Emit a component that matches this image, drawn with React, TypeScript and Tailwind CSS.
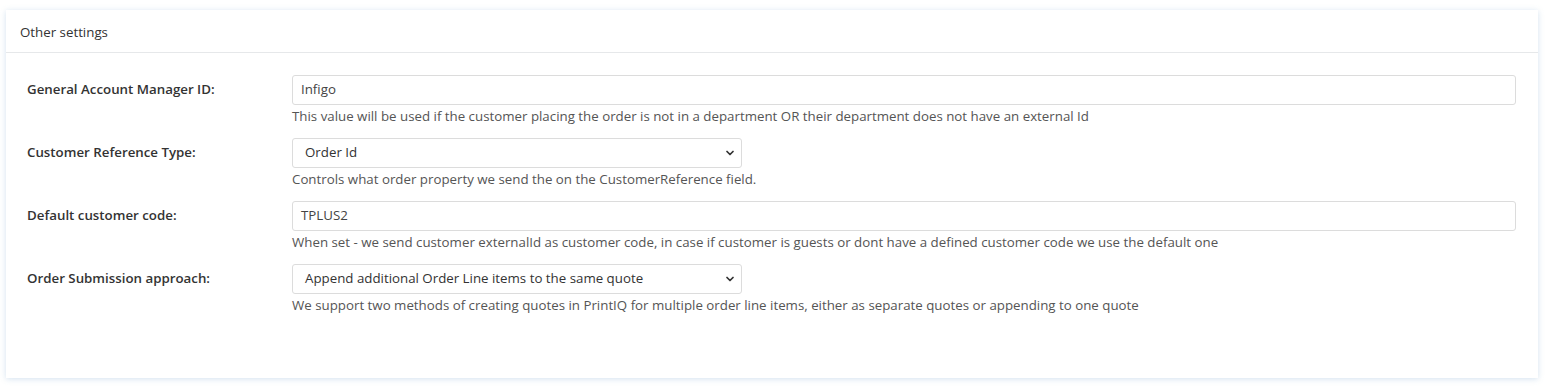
import { ChevronDown } from 'lucide-react'

const font = { fontFamily: '"Open Sans", "Noto Sans", sans-serif' }

function Row({ label, children, help }: { label: string; children: React.ReactNode; help: string }) {
  return (
    <div className="flex mb-[12px]">
      <div className="w-[265px] shrink-0 h-[30px] flex items-center text-[13.3px] font-semibold text-[#333]">{label}</div>
      <div className="flex-1">
        {children}
        <div className="mt-[1px] leading-[20px] text-[13.3px] text-[#555]">{help}</div>
      </div>
    </div>
  )
}

function TextBox({ value }: { value: string }) {
  return (
    <div className="h-[30px] w-full border border-[#dcdcdc] rounded-[3px] px-[8px] flex items-center text-[13.3px] text-[#444]">{value}</div>
  )
}

function SelectBox({ value }: { value: string }) {
  return (
    <div className="h-[30px] w-[450px] border border-[#dcdcdc] rounded-[3px] pl-[12px] pr-[5px] flex items-center justify-between text-[13.3px] text-[#333]">
      <span>{value}</span>
      <ChevronDown size={12} strokeWidth={3.5} className="text-[#333]" />
    </div>
  )
}

export default function App() {
  return (
    <div className="bg-white min-h-[387px] pt-[10px] pl-[6px]" style={font}>
      <div className="w-[1532px] h-[368px] bg-white shadow-[0_1px_6px_rgba(160,190,220,0.45)]">
        <div className="h-[43px] border-b border-[#e6e8ea] flex items-center pt-[3px] px-[14px] text-[13.3px] text-[#333]">Other settings</div>
        <div className="pt-[22px] pl-[21px] pr-[22px]">
          <Row label="General Account Manager ID:" help="This value will be used if the customer placing the order is not in a department OR their department does not have an external Id">
            <TextBox value="Infigo" />
          </Row>
          <Row label="Customer Reference Type:" help="Controls what order property we send the on the CustomerReference field.">
            <SelectBox value="Order Id" />
          </Row>
          <Row label="Default customer code:" help="When set - we send customer externalId as customer code, in case if customer is guests or dont have a defined customer code we use the default one">
            <TextBox value="TPLUS2" />
          </Row>
          <Row label="Order Submission approach:" help="We support two methods of creating quotes in PrintIQ for multiple order line items, either as separate quotes or appending to one quote">
            <SelectBox value="Append additional Order Line items to the same quote" />
          </Row>
        </div>
      </div>
    </div>
  )
}
